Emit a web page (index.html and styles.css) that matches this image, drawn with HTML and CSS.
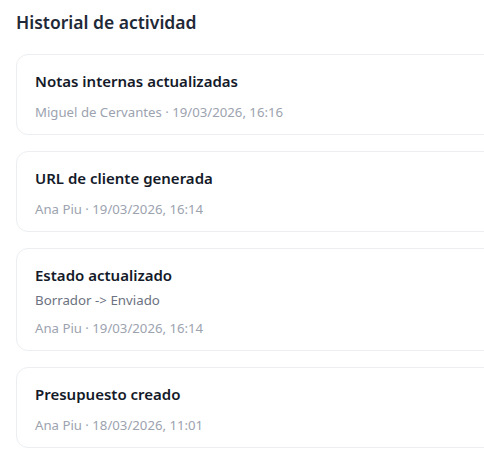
FILE: index.html
```html
<!DOCTYPE html>
<html lang="es">
<head>
<meta charset="utf-8">
<title>Historial de actividad</title>
<link rel="stylesheet" href="styles.css">
</head>
<body>
<section class="history">
  <h2 class="history-title">Historial de actividad</h2>
  <ul class="history-list">
    <li class="entry">
      <div class="entry-title">Notas internas actualizadas</div>
      <div class="entry-meta">Miguel de Cervantes · 19/03/2026, 16:16</div>
    </li>
    <li class="entry">
      <div class="entry-title">URL de cliente generada</div>
      <div class="entry-meta">Ana Piu · 19/03/2026, 16:14</div>
    </li>
    <li class="entry">
      <div class="entry-title">Estado actualizado</div>
      <div class="entry-detail">Borrador -&gt; Enviado</div>
      <div class="entry-meta">Ana Piu · 19/03/2026, 16:14</div>
    </li>
    <li class="entry">
      <div class="entry-title">Presupuesto creado</div>
      <div class="entry-meta">Ana Piu · 18/03/2026, 11:01</div>
    </li>
  </ul>
</section>
</body>
</html>
```
FILE: styles.css
```css
html, body {
  margin: 0;
  padding: 0;
  background: #ffffff;
  overflow: hidden;
}
body {
  font-family: "Noto Sans", "Open Sans", sans-serif;
  color: #111827;
}
.history {
  padding: 10px 0 0 16px;
  width: 520px;
}
.history-title {
  margin: 0;
  font-size: 17.5px;
  line-height: 24px;
  font-weight: 600;
  color: #1f2937;
}
.history-list {
  list-style: none;
  margin: 20px 0 0 0;
  padding: 0;
  display: flex;
  flex-direction: column;
  gap: 16px;
}
.entry {
  border: 1px solid #eceef1;
  border-radius: 12px;
  padding: 16px 18px 13px;
  background: #ffffff;
}
.entry-title {
  font-size: 15px;
  line-height: 20px;
  font-weight: 600;
  color: #141a29;
}
.entry-detail {
  margin-top: 6px;
  font-size: 13.3px;
  line-height: 18px;
  color: #6b7280;
}
.entry-meta {
  margin-top: 12px;
  font-size: 13.2px;
  line-height: 18px;
  color: #9ca3af;
}
.entry-detail + .entry-meta {
  margin-top: 10px;
}
```
